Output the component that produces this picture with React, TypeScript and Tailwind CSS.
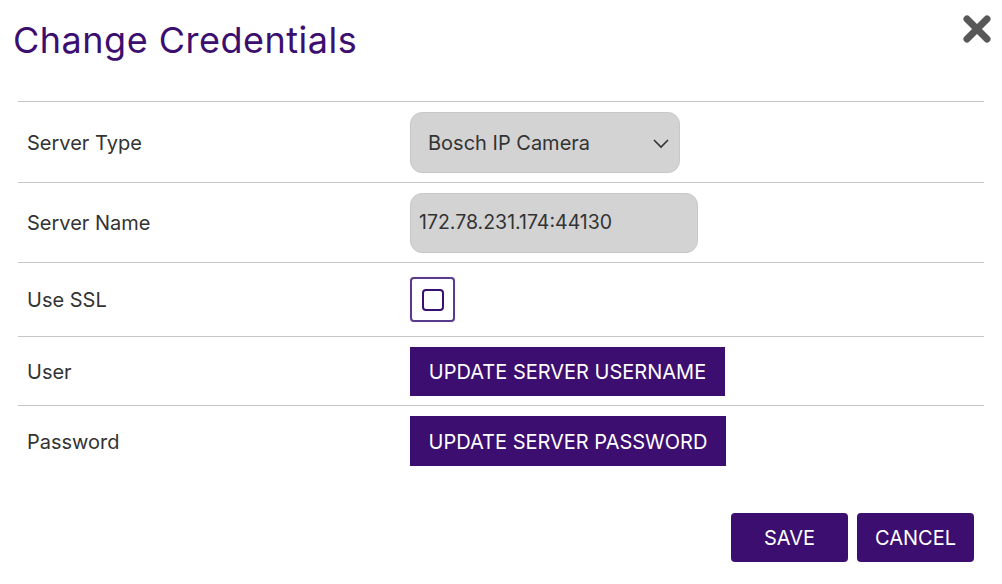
import React from 'react';

const PURPLE = 'bg-[#3b0e6f]';

function Row({ label, children, h }: { label: string; children: React.ReactNode; h: string }) {
  return (
    <div className={`flex items-center border-t border-[#c4c4c4] ${h}`}>
      <div className="w-[392px] pl-[9px] pt-[1px] text-[20px] text-[#333333]">{label}</div>
      <div className="flex items-center">{children}</div>
    </div>
  );
}

export default function App() {
  return (
    <div className="w-[1002px] h-[584px] bg-white relative" style={{ fontFamily: 'Inter, "Noto Sans", sans-serif' }}>
      <div className="flex items-start justify-between pl-[13px] pr-[10px] pt-[18px]">
        <h1 className="text-[36px] leading-[44px] tracking-[0.5px] text-[#3b0e6f]">Change Credentials</h1>
        <svg width="30" height="30" viewBox="0 0 30 30" className="mt-[-4px]">
          <path d="M5 5 L25 25 M25 5 L5 25" stroke="#585858" strokeWidth="7" strokeLinecap="round" />
        </svg>
      </div>

      <div className="mx-[18px] mt-[39px]">
        <Row label="Server Type" h="h-[81px]">
          <div className="w-[270px] h-[61px] rounded-[12px] bg-[#d3d3d3] border border-[#c8c8c8] flex items-center justify-between pl-[17px] pr-[8px] pt-[2px] text-[20px] text-[#333333]">
            <span>Bosch IP Camera</span>
            <svg width="20" height="20" viewBox="0 0 20 20">
              <path d="M3 7 L10 14 L17 7" fill="none" stroke="#333" strokeWidth="1.6" />
            </svg>
          </div>
        </Row>
        <Row label="Server Name" h="h-[80px]">
          <div className="w-[288px] h-[60px] rounded-[12px] bg-[#d3d3d3] border border-[#c8c8c8] flex items-center pl-[8px] pt-[1px] text-[19.5px] text-[#333333]">
            172.78.231.174:44130
          </div>
        </Row>
        <Row label="Use SSL" h="h-[74px]">
          <div className="w-[45px] h-[45px] rounded-[4px] border-2 border-[#5a3a8c] shadow-[0_0_1px_rgba(0,0,0,0.3)] flex items-center justify-center">
            <div className="w-[22px] h-[22px] rounded-[4px] border-2 border-[#3b0e6f]" />
          </div>
        </Row>
        <Row label="User" h="h-[69px]">
          <button className={`${PURPLE} w-[315px] h-[49px] pt-[1px] text-white text-[20px] uppercase`}>Update Server Username</button>
        </Row>
        <Row label="Password" h="h-[71px]">
          <button className={`${PURPLE} w-[316px] h-[50px] pt-[1px] text-white text-[20px] uppercase`}>Update Server Password</button>
        </Row>
      </div>

      <div className="flex justify-end gap-[9px] pr-[28px] mt-[37px]">
        <button className={`${PURPLE} w-[117px] h-[49px] pt-[1px] rounded-[4px] text-white text-[20px]`}>SAVE</button>
        <button className={`${PURPLE} w-[117px] h-[49px] pt-[1px] rounded-[4px] text-white text-[20px]`}>CANCEL</button>
      </div>
    </div>
  );
}
